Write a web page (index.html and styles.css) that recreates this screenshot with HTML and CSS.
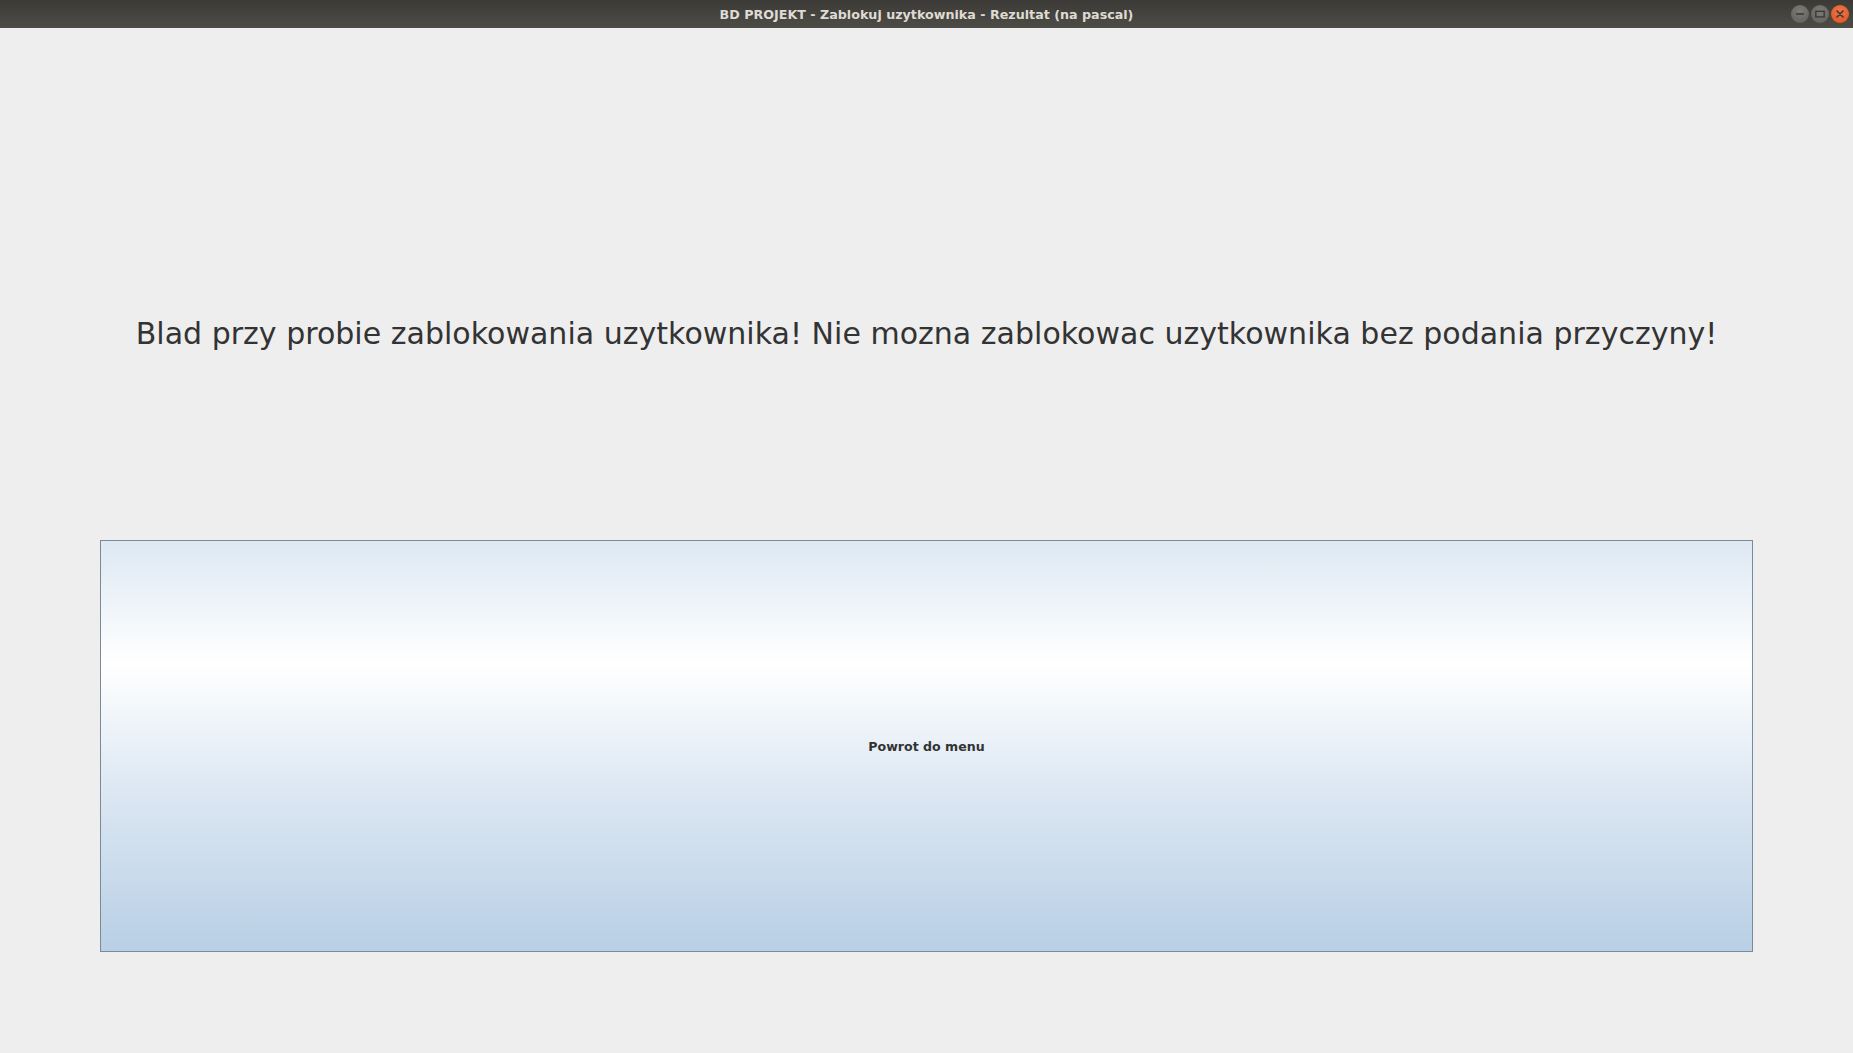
FILE: index.html
```html
<!DOCTYPE html>
<html lang="pl">
<head>
<meta charset="utf-8">
<title>BD PROJEKT - Zablokuj uzytkownika - Rezultat (na pascal)</title>
<link rel="stylesheet" href="styles.css">
</head>
<body>
<div class="window">
  <header class="titlebar">
    <span class="title">BD PROJEKT - Zablokuj uzytkownika - Rezultat (na pascal)</span>
    <div class="controls">
      <span class="ctl ctl-min"><svg width="18" height="18" viewBox="0 0 18 18"><line x1="5" y1="9" x2="13" y2="9" stroke="#3c3b37" stroke-width="1.6"/></svg></span>
      <span class="ctl ctl-max"><svg width="18" height="18" viewBox="0 0 18 18"><rect x="4.8" y="6.3" width="8.4" height="5.6" fill="none" stroke="#3c3b37" stroke-width="1.4"/></svg></span>
      <span class="ctl ctl-close"><svg width="18" height="18" viewBox="0 0 18 18"><path d="M6 6 L12 12 M12 6 L6 12" stroke="#3c3b37" stroke-width="1.7" stroke-linecap="round"/></svg></span>
    </div>
  </header>
  <main class="content">
    <p class="message">Blad przy probie zablokowania uzytkownika! Nie mozna zablokowac uzytkownika bez podania przyczyny!</p>
    <button class="back-btn" type="button">Powrot do menu</button>
  </main>
</div>
</body>
</html>
```
FILE: styles.css
```css
html, body {
  margin: 0;
  padding: 0;
  width: 1853px;
  height: 1053px;
  overflow: hidden;
  background: #eeeeee;
}

.window {
  display: flex;
  flex-direction: column;
  height: 1053px;
}

.titlebar {
  position: relative;
  height: 28px;
  flex: 0 0 28px;
  display: flex;
  align-items: center;
  justify-content: center;
  background: linear-gradient(to bottom, #3b3a36 0%, #4e4c47 100%);
}

.title {
  font-family: "DejaVu Sans", "Liberation Sans", sans-serif;
  font-weight: bold;
  font-size: 12.7px;
  color: #dfdbd2;
}

.controls {
  position: absolute;
  right: 4px;
  top: 5px;
  display: flex;
  gap: 2px;
}

.ctl {
  width: 18px;
  height: 18px;
  border-radius: 50%;
  display: flex;
  align-items: center;
  justify-content: center;
}

.ctl-min, .ctl-max {
  background: radial-gradient(circle at 50% 35%, #7d7b76 0%, #5f5e5a 100%);
}

.ctl-close {
  background: radial-gradient(circle at 50% 35%, #f27547 0%, #e0501d 100%);
}

.content {
  flex: 1;
  display: flex;
  flex-direction: column;
  padding: 0 100px 101px 100px;
}

.message {
  margin: 288px 0 0 0;
  height: 35px;
  line-height: 35px;
  text-align: center;
  font-family: "DejaVu Sans", "Liberation Sans", sans-serif;
  font-size: 30px;
  letter-spacing: 0.02px;
  color: #333333;
  white-space: nowrap;
}

.back-btn {
  margin-top: auto;
  height: 412px;
  width: 100%;
  border: 1px solid #7a8a99;
  border-radius: 0;
  padding: 1px 0 0 0;
  background: linear-gradient(to bottom,
    #dde8f3 0%,
    #ffffff 30%,
    #dde8f3 60%,
    #b8cfe5 100%);
  font-family: "DejaVu Sans", "Liberation Sans", sans-serif;
  font-weight: bold;
  font-size: 12.6px;
  color: #333333;
  cursor: pointer;
}
```
